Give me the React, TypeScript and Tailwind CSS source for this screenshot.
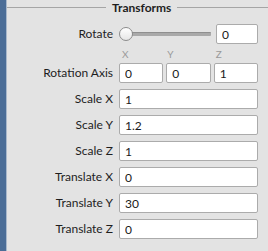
const font = { fontFamily: "Lato, 'Liberation Sans', sans-serif" };

type RowProps = {
  label: string;
  children: React.ReactNode;
};

const Row = ({ label, children }: RowProps) => (
  <div className="flex items-center h-[20px]">
    <span className="w-[106px] shrink-0 text-right text-[12px] text-[#1e1e1e] leading-none">
      {label}
    </span>
    <div className="flex-1 ml-[6px] flex items-center h-full">{children}</div>
  </div>
);

const Field = ({ value, className = "" }: { value: string; className?: string }) => (
  <input
    readOnly
    value={value}
    className={`h-[20px] bg-white border border-[#ababab] rounded-[2px] pl-[5px] text-[12px] text-[#1a1a1a] outline-none ${className}`}
    style={font}
  />
);

export default function App() {
  return (
    <div className="flex w-[268px] h-[251px] overflow-hidden" style={font}>
      <div className="w-[6px] bg-[#4b6d97] shrink-0" />
      <div className="w-[1px] bg-[#a9b8cb] shrink-0" />
      <div className="flex-1 bg-[#e3e3e3] flex flex-col pr-[10px]">
        <div className="flex items-center h-[15px] -mr-[10px]">
          <div className="w-[99px] h-[1px] bg-[#a5a5a5]" />
          <span className="px-[6px] text-[12px] font-bold text-[#1e1e1e] leading-none">
            Transforms
          </span>
          <div className="flex-1 h-[1px] bg-[#a5a5a5]" />
        </div>

        <div className="mt-[9px]">
          <Row label="Rotate">
            <div className="flex-1 relative h-[16px] flex items-center">
              <div className="ml-[6px] flex-1 h-[4px] bg-[#a9a9a9] border-t border-[#8f8f8f] rounded-[1px]" />
              <div className="absolute left-0 top-[1px] w-[14px] h-[14px] rounded-full border border-[#8c8c8c] bg-gradient-to-b from-white to-[#e6e6e6]" />
            </div>
            <Field value="0" className="w-[42px] ml-[5px]" />
          </Row>
        </div>

        <div className="flex h-[19px] items-center">
          <div className="w-[112px] shrink-0" />
          <div className="flex-1 grid grid-cols-3 gap-[3px] text-[10px] text-[#9a9a9a] leading-none">
            <span className="pl-[3px]">X</span>
            <span className="pl-[1px]">Y</span>
            <span className="pl-[2px]">Z</span>
          </div>
        </div>

        <div className="flex flex-col gap-[6px]">
          <Row label="Rotation Axis">
            <div className="flex-1 grid grid-cols-3 gap-[3px]">
              <Field value="0" className="w-full" />
              <Field value="0" className="w-full" />
              <Field value="1" className="w-full" />
            </div>
          </Row>
          <Row label="Scale X">
            <Field value="1" className="w-full" />
          </Row>
          <Row label="Scale Y">
            <Field value="1.2" className="w-full" />
          </Row>
          <Row label="Scale Z">
            <Field value="1" className="w-full" />
          </Row>
          <Row label="Translate X">
            <Field value="0" className="w-full" />
          </Row>
          <Row label="Translate Y">
            <Field value="30" className="w-full" />
          </Row>
          <Row label="Translate Z">
            <Field value="0" className="w-full" />
          </Row>
        </div>
      </div>
    </div>
  );
}
